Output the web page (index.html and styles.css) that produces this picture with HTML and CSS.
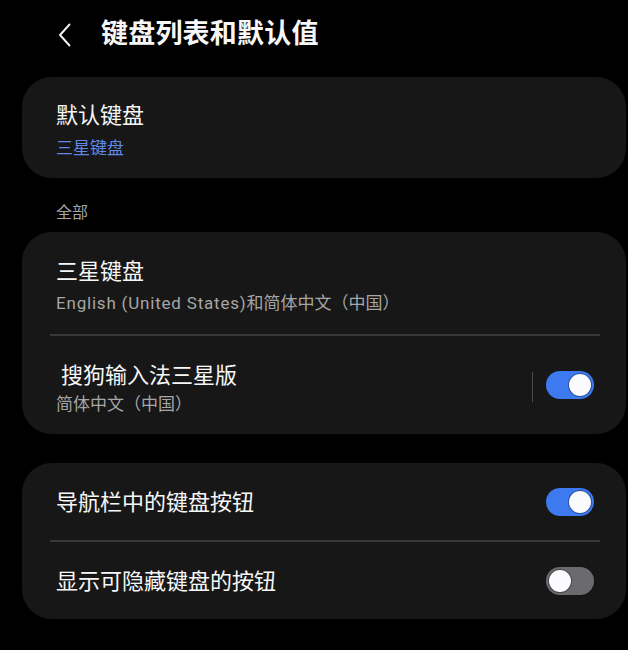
FILE: index.html
```html
<!DOCTYPE html>
<html lang="zh-CN">
<head>
  <meta charset="UTF-8" />
  <title>键盘列表和默认值</title>
  <link rel="stylesheet" href="styles.css">
</head>
<body>
  <div class="header">
    <svg class="back" width="18" height="24" viewBox="0 0 18 24">
      <path d="M13.5 1.5 L4 12 L13.5 22.5" fill="none" stroke="#f2f2f2" stroke-width="1.9" stroke-linecap="round" stroke-linejoin="round"/>
    </svg>
    <h1>键盘列表和默认值</h1>
  </div>

  <div class="card card-default">
    <div class="title">默认键盘</div>
    <div class="sub blue">三星键盘</div>
  </div>

  <div class="section">全部</div>

  <div class="card">
    <div class="row row-a">
      <div class="title">三星键盘</div>
      <div class="sub"><span class="latin">English (United States)</span>和简体中文（中国）</div>
    </div>
    <div class="divider"></div>
    <div class="row row-b">
      <div class="text">
        <div class="title indent">搜狗输入法三星版</div>
        <div class="sub">简体中文（中国）</div>
      </div>
      <div class="vline"></div>
      <div class="toggle on"><span class="knob"></span></div>
    </div>
  </div>

  <div class="card card-last">
    <div class="row row-c">
      <div class="title">导航栏中的键盘按钮</div>
      <div class="toggle on"><span class="knob"></span></div>
    </div>
    <div class="divider"></div>
    <div class="row row-c">
      <div class="title">显示可隐藏键盘的按钮</div>
      <div class="toggle"><span class="knob"></span></div>
    </div>
  </div>
</body>
</html>
```

FILE: styles.css
```css
:root {
  --bg-color: #000000;
  --card-color: #171717;
  --text-color: #f7f7f7;
  --sub-color: #a6a6a6;
  --blue: #6088e6;
  --switch-blue: #3d7af0;
}

body {
  margin: 0;
  background-color: var(--bg-color);
  color: var(--text-color);
  font-family: "Roboto", "Noto Sans CJK SC", sans-serif;
  width: 628px;
  height: 650px;
  overflow: hidden;
}

.header {
  display: flex;
  align-items: center;
  height: 68px;
  padding-left: 56px;
}

.back {
  margin-top: 1px;
}

.header h1 {
  margin: 0 0 0 27px;
  font-size: 27px;
  font-weight: 700;
  line-height: 34px;
  letter-spacing: 0.2px;
}

.card {
  background: var(--card-color);
  border-radius: 30px;
  margin: 0 2px 0 22px;
}

.card-default {
  margin-top: 9px;
  height: 101px;
  box-sizing: border-box;
  padding: 24px 34px 0;
}

.title {
  font-size: 22px;
  line-height: 30px;
}

.sub {
  font-size: 17px;
  line-height: 24px;
  color: var(--sub-color);
  margin-top: 4px;
}

.sub .latin {
  letter-spacing: 0.8px;
}

.sub.blue {
  color: var(--blue);
  margin-top: 5px;
}

.section {
  font-size: 16px;
  line-height: 22px;
  color: var(--sub-color);
  padding: 24px 0 0 56px;
  height: 30px;
}

.row {
  box-sizing: border-box;
  padding: 0 32px 0 34px;
}

.row-a {
  height: 102px;
  padding-top: 25px;
}

.row-b {
  height: 98px;
  display: flex;
  align-items: center;
}

.row-b .text {
  flex: 1;
  margin-top: 6px;
}

.row-b .sub {
  margin-top: 1px;
}

.indent {
  padding-left: 5px;
}

.row-c {
  height: 77px;
  display: flex;
  align-items: center;
  justify-content: space-between;
}

.row-c .title {
  margin-top: 2px;
}

.divider {
  height: 2px;
  background: #383838;
  margin: 0 26px 0 28px;
}

.vline {
  width: 1px;
  height: 30px;
  background: #4a4a4a;
  margin-right: 13px;
  margin-top: 4px;
}

.toggle {
  position: relative;
  width: 48px;
  height: 28px;
  border-radius: 14px;
  background: #6b6b6f;
  flex: none;
}

.toggle.on {
  background: var(--switch-blue);
}

.knob {
  position: absolute;
  top: 3px;
  left: 3px;
  width: 22px;
  height: 22px;
  border-radius: 50%;
  background: #fbfbfd;
  box-shadow: 0 0 0 1px rgba(0, 0, 0, 0.35);
}

.toggle.on .knob {
  left: 23px;
}

.card-last {
  margin-top: 29px;
}
```
